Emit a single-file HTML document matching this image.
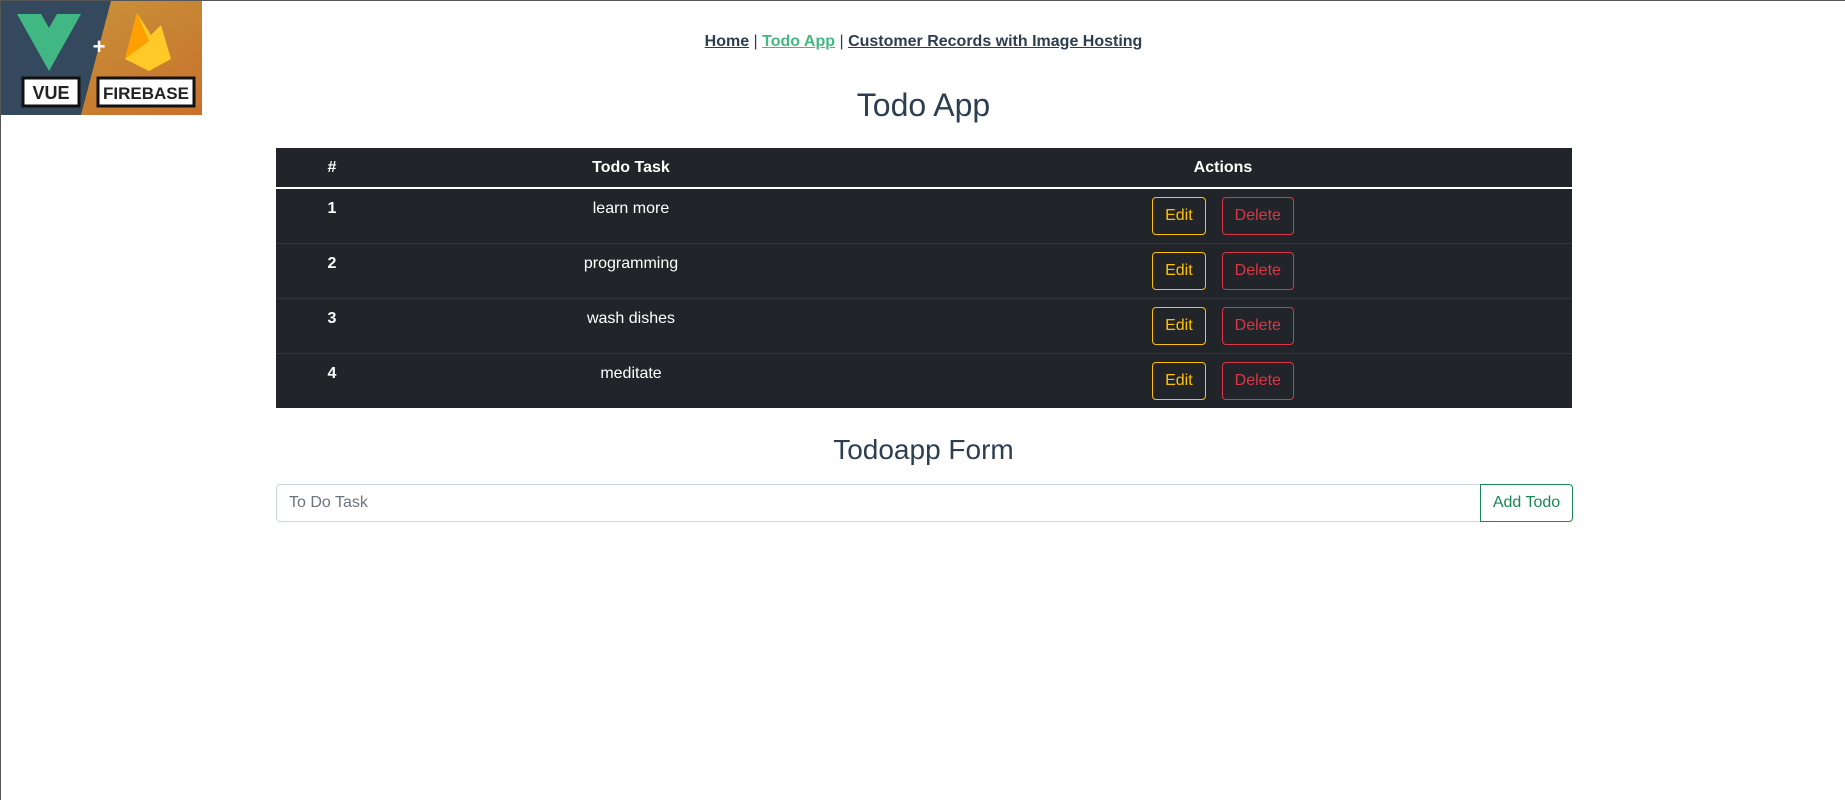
<!DOCTYPE html>
<html><head><meta charset="utf-8"><style>
*{box-sizing:border-box;margin:0;padding:0}
body{width:1845px;height:800px;background:#fff;font-family:"Liberation Sans",Arial,sans-serif;position:relative;overflow:hidden;border-top:1px solid #555;border-left:1px solid #555}
.abs{position:absolute}
#nav{left:0;width:1845px;top:32px;text-align:center;font-size:16px;color:#2c3e50}
#nav a{color:#2c3e50;text-decoration:underline;font-weight:bold}
#nav a.act{color:#42b983}
h1{position:absolute;left:0;width:1845px;top:85px;text-align:center;font-weight:normal;font-size:32px;color:#2c3e50;line-height:38px}
h2{position:absolute;left:0;width:1845px;top:432px;text-align:center;font-weight:normal;font-size:28px;color:#2c3e50;line-height:34px}
table{position:absolute;left:275px;top:147px;width:1296px;border-collapse:collapse;background:#212529;color:#fff;font-size:16px}
th{height:40px;font-weight:bold;text-align:center;border-bottom:2px solid #fff;padding:0}
td{height:55px;text-align:center;vertical-align:top;padding:8px 0 0 0;line-height:24px;border-bottom:1px solid #32383e}
tr:last-child td{border-bottom:none;height:55px}
td.n{font-weight:bold}
.btn{display:inline-block;height:38px;line-height:36px;border:1px solid;border-radius:4px;font-size:16px;padding:0 12px;vertical-align:top}
.e{color:#ffc107;border-color:#ffc107}
.d{color:#dc3545;border-color:#dc3545;margin-left:16px}
#inp{left:275px;top:483px;width:1205px;height:38px;border:1px solid #ced4da;border-radius:4px 0 0 4px;color:#6c757d;font-size:16px;line-height:36px;padding-left:12px}
#add{left:1479px;top:483px;width:93px;height:38px;border:1px solid #198754;border-radius:0 4px 4px 0;color:#198754;font-size:16px;line-height:36px;text-align:center}
</style></head><body>
<div class="abs" style="left:0;top:0;width:201px;height:114px;overflow:hidden">
<svg width="201" height="114" viewBox="0 0 201 114">
<defs><linearGradient id="g" x1="0" y1="0" x2="1" y2="1"><stop offset="0" stop-color="#c79a3c"/><stop offset="1" stop-color="#c9702c"/></linearGradient></defs>
<rect width="201" height="114" fill="url(#g)"/>
<polygon points="0,0 110,0 80,114 0,114" fill="#34495e"/>
<polygon points="16,13 80,13 48,70" fill="#41b883"/>
<polygon points="40,13 56,13 48,27" fill="#34495e"/>
<text x="98" y="53" font-family="Liberation Sans" font-weight="bold" font-size="22" fill="#fff" text-anchor="middle">+</text>
<polygon points="136,12 124,58 148,70 170,58 160,24 150,34" fill="#ffca28"/>
<polygon points="136,12 124,58 148,40" fill="#ffa000"/>
<rect x="22" y="77" width="56" height="28" fill="#fff" stroke="#111" stroke-width="3"/>
<text x="50" y="98" font-family="Liberation Sans" font-weight="bold" font-size="18" fill="#222" text-anchor="middle">VUE</text>
<rect x="97" y="77" width="96" height="28" fill="#fff" stroke="#111" stroke-width="3"/>
<text x="145" y="98" font-family="Liberation Sans" font-weight="bold" font-size="17" fill="#222" text-anchor="middle">FIREBASE</text>
</svg></div>
<div id="nav" class="abs"><a>Home</a> | <a class="act">Todo App</a> | <a>Customer Records with Image Hosting</a></div>
<h1>Todo App</h1>
<table>
<colgroup><col style="width:112px"><col style="width:486px"><col></colgroup>
<tr><th>#</th><th>Todo Task</th><th>Actions</th></tr>
<tr><td class="n">1</td><td>learn more</td><td><span class="btn e">Edit</span><span class="btn d">Delete</span></td></tr>
<tr><td class="n">2</td><td>programming</td><td><span class="btn e">Edit</span><span class="btn d">Delete</span></td></tr>
<tr><td class="n">3</td><td>wash dishes</td><td><span class="btn e">Edit</span><span class="btn d">Delete</span></td></tr>
<tr><td class="n">4</td><td>meditate</td><td><span class="btn e">Edit</span><span class="btn d">Delete</span></td></tr>
</table>
<h2>Todoapp Form</h2>
<div id="inp" class="abs">To Do Task</div>
<div id="add" class="abs">Add Todo</div>
</body></html>
